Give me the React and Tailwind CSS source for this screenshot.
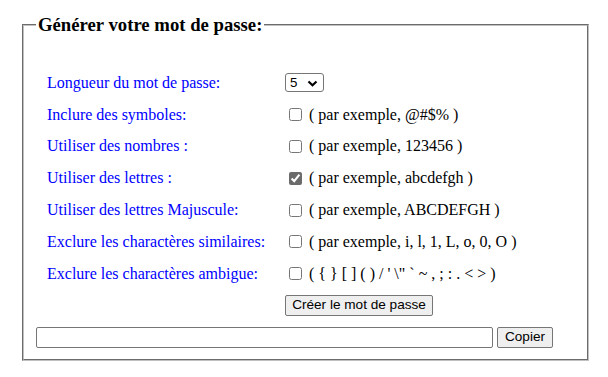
import React from "react";

const rows = [
  { label: "Inclure des symboles:", ex: "( par exemple, @#$% )" },
  { label: "Utiliser des nombres :", ex: "( par exemple, 123456 )" },
  { label: "Utiliser des lettres :", ex: "( par exemple, abcdefgh )", checked: true },
  { label: "Utiliser des lettres Majuscule:", ex: "( par exemple, ABCDEFGH )" },
  { label: "Exclure les charactères similaires:", ex: "( par exemple, i, l, 1, L, o, 0, O )" },
  { label: "Exclure les charactères ambigue:", ex: "( { } [ ] ( ) / ' \\\" ` ~ , ; : . < > )" },
];

export default function App() {
  return (
    <div className="w-[608px] h-[377px] bg-white pt-[14px] pl-[22px] font-['Liberation_Serif',_'Times_New_Roman',_serif] text-[16px] text-black">
      <fieldset className="w-[567px] border-2 [border-style:groove] border-[#c0c0c0] px-[12px] pb-[11px]">
        <legend className="px-[2px] font-bold text-[18.72px] leading-[22px]">Générer votre mot de passe:</legend>
        <div className="mt-[31px] grid grid-cols-[249px_1fr]">
          <div className="h-[31.8px] flex items-center pl-[11px] text-[#0000ff]">Longueur du mot de passe:</div>
          <div className="h-[31.8px] flex items-center">
            <div className="relative w-[39px] h-[19px] border border-[#767676] rounded-[3px] bg-white flex items-center pl-[4px] font-['Liberation_Sans',_Arial,_sans-serif] text-[13.33px]">
              <span>5</span>
              <svg className="absolute right-[5px] top-[6px] pointer-events-none" width="11" height="7" viewBox="0 0 11 7">
                <path d="M1.5 1.5 L5.5 5.2 L9.5 1.5" fill="none" stroke="#000" strokeWidth="2.2" />
              </svg>
            </div>
          </div>
          {rows.map((r, i) => (
            <React.Fragment key={i}>
              <div className="h-[31.8px] flex items-center pl-[11px] text-[#0000ff] whitespace-nowrap">{r.label}</div>
              <div className="h-[31.8px] flex items-center whitespace-pre">
                <input
                  type="checkbox"
                  defaultChecked={r.checked}
                  className="w-[13px] h-[13px] ml-[4px] mr-[3px] accent-[#6b6b6b]"
                />
                <span>{" " + r.ex}</span>
              </div>
            </React.Fragment>
          ))}
          <div className="h-[31px]"></div>
          <div className="h-[31px] flex items-center">
            <button className="w-[148px] h-[21px] border border-[#767676] rounded-[2px] bg-[#efefef] font-['Liberation_Sans',_Arial,_sans-serif] text-[13.6px] leading-none text-black">
              Créer le mot de passe
            </button>
          </div>
        </div>
        <div className="mt-[6px] flex items-center gap-[4px] font-['Liberation_Sans',_Arial,_sans-serif] text-[13.6px]">
          <input type="text" className="w-[457px] h-[21px] border border-[#767676] rounded-[2px] bg-white" />
          <button className="h-[21px] w-[56px] border border-[#767676] rounded-[2px] bg-[#efefef] leading-none text-black">Copier</button>
        </div>
      </fieldset>
    </div>
  );
}
